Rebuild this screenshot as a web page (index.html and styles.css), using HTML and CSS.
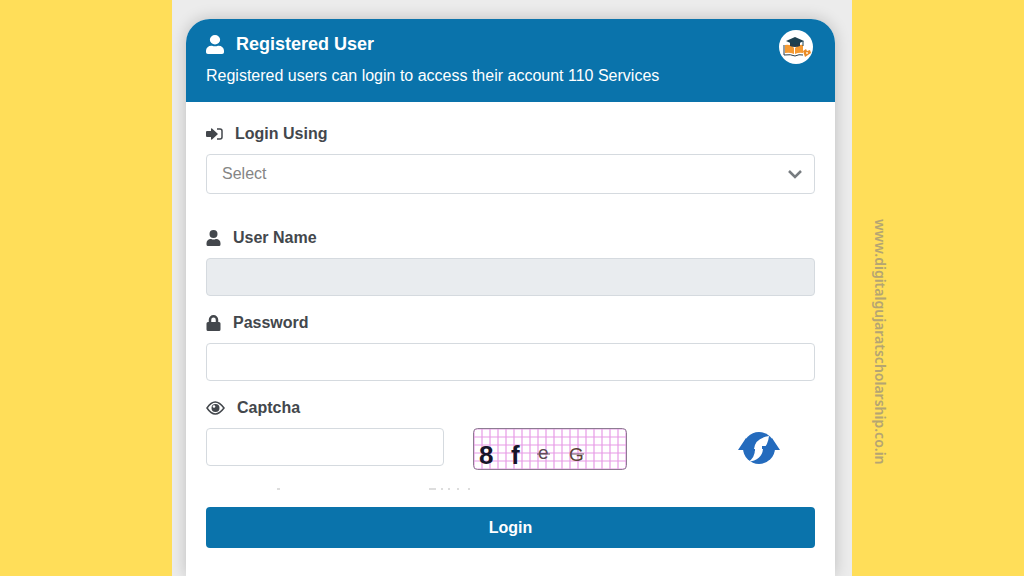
FILE: index.html
```
<!DOCTYPE html>
<html lang="en">
<head>
    <meta charset="UTF-8">
    <meta name="viewport" content="width=device-width, initial-scale=1.0">
    <title>Registered User Login</title>
    <link rel="stylesheet" href="styles.css">
</head>
<body>
    <main class="panel">
        <div class="card">
            <header class="card-header">
                <div>
                    <h1 class="title">
                        <svg width="18" height="19" viewBox="0 0 448 512" fill="currentColor" preserveAspectRatio="none" aria-hidden="true"><path d="M224 256a128 128 0 1 0 0-256 128 128 0 0 0 0 256zm90 32h-17a174 174 0 0 1-146 0h-17A134 134 0 0 0 0 422v42a48 48 0 0 0 48 48h352a48 48 0 0 0 48-48v-42a134 134 0 0 0-134-134z"/></svg>
                        Registered User
                    </h1>
                    <p class="subtitle">Registered users can login to access their account 110 Services</p>
                </div>
                <svg class="logo" width="34" height="34" viewBox="0 0 34 34" aria-hidden="true">
                    <circle cx="17" cy="17" r="17" fill="#fff"/>
                    <path d="M5 15v10q7-1 11 1 4-2 8-1" fill="none" stroke="#2c3f4a" stroke-width="1"/>
                    <path d="M6 15q6-1 9 3v6q-4-2-9-1zM16 18q4-4 8-3v8q-4-1-8 1z" fill="#f59a32"/>
                    <path d="M11 11v5q5 2 10 0v-5z" fill="#263d49"/>
                    <path d="M7 11l9-4 9 4-9 4z" fill="#1d4050"/>
                    <path d="M24 11v5" stroke="#1d4050"/>
                    <path d="M24 21l3-2 1 2 3-1 1 3-3 2-3 2-1-3z" fill="#e98b27"/>
                    <circle cx="28" cy="23" r="1" fill="#fff1d8"/>
                </svg>
            </header>

            <form class="card-body">
                <div class="field field-select">
                    <label class="label" for="login-using">
                        <svg width="17" height="14" viewBox="0 0 17 14" fill="currentColor" aria-hidden="true"><path d="M0 5q0-1 1-1h4V2q0-1 1-.5L12 7l-6 5.500Q5 13 5 12v-2H1q-1 0-1-1z"/><path d="M11 2h3q2 0 2 2v6q0 2-2 2h-3" fill="none" stroke="currentColor" stroke-width="1.500"/></svg>
                        Login Using
                    </label>
                    <div class="select-wrap">
                        <select class="control select" id="login-using">
                            <option>Select</option>
                        </select>
                        <svg class="chevron" width="14" height="10" viewBox="0 0 14 10" aria-hidden="true"><path d="M1 2l6 6 6-6" fill="none" stroke="#777c80" stroke-width="2.500"/></svg>
                    </div>
                </div>

                <div class="field">
                    <label class="label" for="username">
                        <svg width="15" height="16" viewBox="0 0 448 512" fill="currentColor" aria-hidden="true"><path d="M224 256a128 128 0 1 0 0-256 128 128 0 0 0 0 256zm90 32h-17a174 174 0 0 1-146 0h-17A134 134 0 0 0 0 422v42a48 48 0 0 0 48 48h352a48 48 0 0 0 48-48v-42a134 134 0 0 0-134-134z"/></svg>
                        User Name
                    </label>
                    <input class="control" type="text" id="username" disabled>
                </div>

                <div class="field">
                    <label class="label" for="password">
                        <svg width="15" height="16" viewBox="0 0 448 512" fill="currentColor" aria-hidden="true"><path d="M400 224h-24v-72a152 152 0 0 0-304 0v72H48a48 48 0 0 0-48 48v192a48 48 0 0 0 48 48h352a48 48 0 0 0 48-48V272a48 48 0 0 0-48-48zm-104 0H152v-72a72 72 0 0 1 144 0z"/></svg>
                        Password
                    </label>
                    <input class="control" type="password" id="password">
                </div>

                <label class="label" for="captcha">
                    <svg width="19" height="14" viewBox="0 0 19 14" aria-hidden="true"><path d="M1 7q8-12 17 0-9 12-17 0z" fill="none" stroke="currentColor" stroke-width="1.500"/><circle cx="9.500" cy="7" r="4" fill="currentColor"/><circle cx="8" cy="5.500" r="1.300" fill="#fff"/></svg>
                    Captcha
                </label>
                <div class="captcha-row">
                    <input class="control captcha-input" type="text" id="captcha">
                    <svg class="captcha-image" width="154" height="42" viewBox="0 0 154 42" role="img" aria-label="Captcha code">
                        <defs>
                            <pattern id="grid" width="8" height="8" patternUnits="userSpaceOnUse">
                                <path d="M1 0v8M0 1h8" stroke="#e79be6" stroke-width="1.200"/>
                            </pattern>
                        </defs>
                        <rect x="0.500" y="0.500" width="153" height="41" rx="4" fill="#fff"/>
                        <rect x="0.500" y="0.500" width="153" height="41" rx="4" fill="url(#grid)" stroke="#8d7c92"/>
                        <text class="code code-big" x="6" y="36">8</text>
                        <text class="code code-big" x="38" y="36">f</text>
                        <text class="code code-e" x="65" y="31">e</text>
                        <text class="code code-g" x="96" y="33">G</text>
                        <path d="M64 26h13M97 26h14" stroke="#6e5363"/>
                    </svg>
                    <button class="refresh" type="button" aria-label="Refresh captcha">
                        <svg width="42" height="34" viewBox="0 0 42 34" fill="#246bbd" aria-hidden="true">
                            <circle cx="21" cy="17" r="16"/>
                            <path d="M0 19L8 7l6 12zM27 19l7-12 8 12z"/>
                            <path d="M31 5q-14 2-15 13h1q0 9-7 13 14-2 15-13 5-4 6-13z" fill="#fff"/>
                            <path d="M24 15h7v3h-7zM11 18h6v2h-6z"/>
                        </svg>
                    </button>
                </div>

                <svg class="rule" width="270" height="3" viewBox="0 0 270 3" aria-hidden="true"><path d="M71 1h3M223 1h7M235 1h2M242 1h2M251 1h2M262 1h2" stroke="#bbb"/></svg>

                <button class="login" type="submit">Login</button>
            </form>
        </div>
    </main>
    <aside class="watermark">www.digitalgujaratscholarship.co.in</aside>
</body>
</html>
```
FILE: styles.css
```
* {
    box-sizing: border-box;
}

body {
    margin: 0;
    min-height: 100vh;
    display: grid;
    grid-template-columns: 1fr minmax(0, 680px) 1fr;
    background-color: #ffde59;
    font-family: "Liberation Sans", Arial, sans-serif;
    font-size: 16px;
    line-height: 24px;
    color: #495057;
}

.panel {
    grid-column: 2;
    display: flex;
    padding: 19px 17px 0 14px;
    background-color: #ececec;
    overflow: hidden;
}

.card {
    flex: 1;
    background-color: #fff;
    border-radius: 24px 24px 0 0;
    box-shadow: 0 0 16px rgba(0, 0, 0, 0.2);
}

.card-header {
    display: flex;
    justify-content: space-between;
    align-items: flex-start;
    padding: 11px 22px 14px 20px;
    border-radius: 24px 24px 0 0;
    background-color: #0a73ab;
    color: #fff;
}

.title {
    display: flex;
    align-items: center;
    gap: 12px;
    margin: 2px 0 8px;
    font-size: 18px;
    line-height: 24px;
}

.subtitle {
    margin: 0;
}

.card-body {
    padding: 20px 20px 28px;
}

.field {
    margin-bottom: 15px;
}

.field-select {
    margin-bottom: 32px;
}

.label {
    display: flex;
    align-items: center;
    gap: 12px;
    margin-bottom: 8px;
    font-weight: bold;
    color: #43474c;
}

.control {
    display: block;
    width: 100%;
    height: 38px;
    padding: 6px 15px;
    border: 1px solid #d5dadf;
    border-radius: 4px;
    background-color: #fff;
    font: inherit;
    color: #495057;
}

.control:disabled {
    background-color: #e9ecef;
}

.select-wrap {
    position: relative;
}

.select {
    height: 40px;
    appearance: none;
    color: #858585;
}

.chevron {
    position: absolute;
    right: 13px;
    top: 15px;
    pointer-events: none;
}

.captcha-row {
    display: flex;
    align-items: flex-start;
}

.captcha-input {
    width: 39%;
    margin-right: 29px;
}

.code {
    font-family: "Liberation Sans", Arial, sans-serif;
    fill: #17152a;
}

.code-big {
    font-size: 26px;
    font-weight: bold;
}

.code-e {
    font-size: 19px;
    fill: #5c4a50;
}

.code-g {
    font-size: 19px;
    fill: #5c4338;
}

.refresh {
    margin: 3px 35px 0 auto;
    padding: 0;
    border: 0;
    background: none;
    cursor: pointer;
}

.refresh svg {
    display: block;
}

.rule {
    display: block;
    margin: 18px 0 16px;
}

.login {
    width: 100%;
    height: 41px;
    border: 0;
    border-radius: 4px;
    background-color: #0a73ab;
    color: #fff;
    font: inherit;
    font-weight: bold;
    cursor: pointer;
}

.watermark {
    align-self: center;
    justify-self: start;
    margin: 108px 0 0 16px;
    writing-mode: vertical-rl;
    font-family: "Noto Sans", sans-serif;
    font-size: 14px;
    font-weight: 600;
    color: #b5a572;
}
```
